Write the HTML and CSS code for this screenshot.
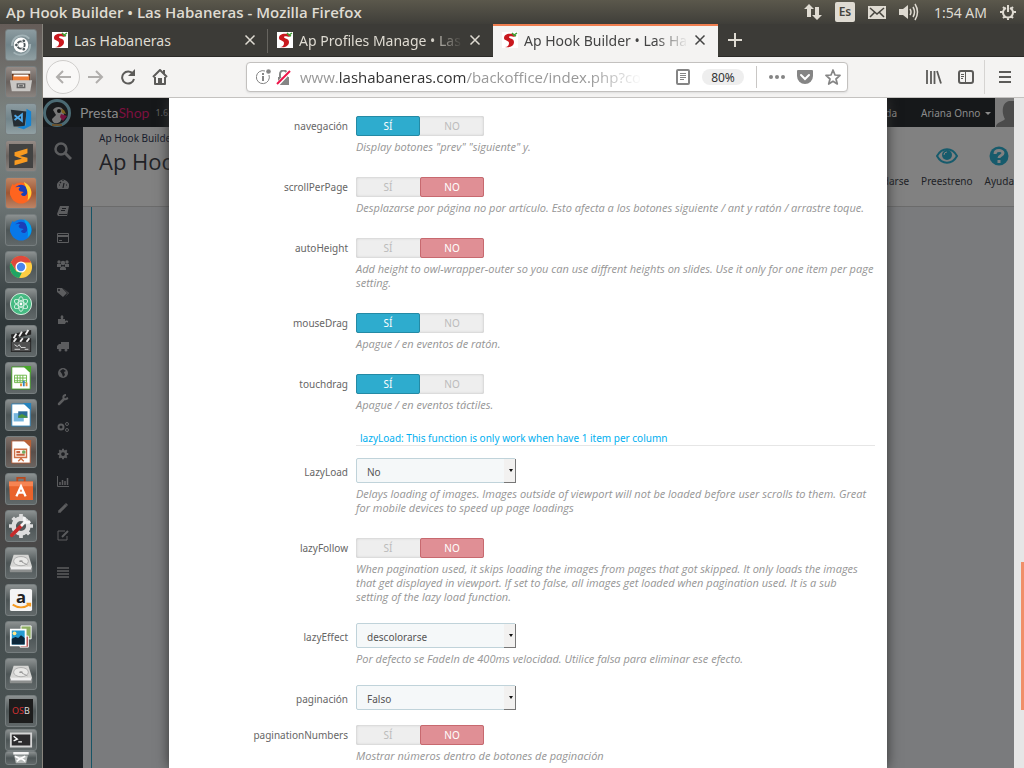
FILE: index.html
```html
<!DOCTYPE html>
<html lang="es">
<head>
<meta charset="utf-8">
<title>Ap Hook Builder • Las Habaneras</title>
<link rel="stylesheet" href="styles.css">
</head>
<body>
<svg class="defs" width="0" height="0" aria-hidden="true">
  <defs>
    <symbol id="chili" viewBox="0 0 16 16"><path fill="#fff" d="M0 0h16v16H0z"/><path fill="#c9191f" d="M11 2C5 1 2 3 2 6c0 3 5 2 5 5 0 2-1 4-4 4 5 1 9-1 9-5 0-4-5-3-5-5 0-1 2-1 6 0z"/><path fill="none" stroke="#3f9b32" stroke-width="1.5" d="M10 1l2 2 3-2M12 3l2 1"/></symbol>
    <symbol id="close" viewBox="0 0 12 12"><path fill="none" stroke="currentColor" stroke-width="1.5" d="M1.500 1.500l9 9M10.500 1.500l-9 9"/></symbol>
    <symbol id="drive" viewBox="0 0 26 26"><path fill="#d5d5d3" d="M5 4h16l4 13v5H1v-5z"/><path fill="#8d8f8e" d="M1 18h24v5H1z"/><path fill="#eee" d="M2 17h22v3H2z"/><ellipse cx="13" cy="11" rx="8" ry="5" fill="#e9e9e7" stroke="#aaa"/><ellipse cx="13" cy="11" rx="2" ry="1" fill="#999"/><path stroke="#999" d="M14 12l6 3"/></symbol>
    <symbol id="fox" viewBox="0 0 26 26"><circle cx="13" cy="13" r="11.500" fill="currentColor"/><circle cx="13" cy="11" r="7" fill="#1b3fb8"/><path d="M1 13C1 8 3 5 4 3l3 4c2-1 4-1 5 0-2 1-2 3 0 4l4 1-3 2c1 3 5 3 7 0-1 6-6 7-10 6-5 0-9-3-9-7z" fill="currentColor"/></symbol>
    <symbol id="gear" viewBox="0 0 16 16"><circle cx="8" cy="8" r="4" fill="none" stroke="currentColor" stroke-width="3"/><path stroke="currentColor" stroke-width="2.500" d="M8 1v3M8 12v3M1 8h3M12 8h3M3 3l2 2M11 11l2 2M13 3l-2 2M5 11l-2 2"/></symbol>
  </defs>
</svg>

<header class="panel">
  <h1 class="panel-title">Ap Hook Builder • Las Habaneras - Mozilla Firefox</h1>
  <div class="panel-tray">
    <svg width="18" height="18" viewBox="0 0 18 18"><path fill="currentColor" d="M5 1l5 5H7v8H3V6H0zM13 17l5-5h-3V4h-4v8H8z"/></svg>
    <span class="lang">Es</span>
    <svg width="18" height="13" viewBox="0 0 18 13"><path fill="currentColor" d="M0 0h18v13H0z"/><path fill="none" stroke="#46443e" stroke-width="1.500" d="M2 2l7 6 7-6M2 11l5-5M16 11l-5-5"/></svg>
    <svg width="20" height="18" viewBox="0 0 20 18"><path fill="currentColor" d="M0 6h4l5-4v14l-5-4H0z"/><path fill="none" stroke="currentColor" stroke-width="1.500" d="M11 6q2 3 0 6M14 4q3 5 0 10M16 1q5 8 0 16"/></svg>
    <span class="clock">1:54 AM</span>
    <svg width="16" height="16" viewBox="0 0 16 16"><path fill="none" stroke="currentColor" stroke-width="2" d="M6 4a5 5 0 1 0 4 0M8 1v7M0 8h3M13 8h3M3 3l2 2M13 3l-2 2M3 14l2-2M13 14l-2-2M8 13v3"/></svg>
  </div>
</header>

<div class="desktop">
  <nav class="launcher" aria-label="Lanzador">
    <button class="tile tile-light" aria-label="Ubuntu"><svg viewBox="0 0 26 26"><path fill="none" stroke="#a3b3b7" stroke-width="2" d="M3 14C4 2 16 0 22 6M23 12c0 12-12 14-18 9"/><circle cx="13" cy="13" r="8" fill="#fff"/><circle cx="13" cy="13" r="4" fill="none" stroke="#4b5559" stroke-width="2"/><g fill="#4b5559" stroke="#fff"><circle cx="8" cy="13" r="2"/><circle cx="16" cy="8.500" r="2"/><circle cx="16" cy="17.500" r="2"/></g></svg></button>
    <button class="tile tile-warm" aria-label="Archivos"><svg viewBox="0 0 26 26"><path fill="#e9e6e2" d="M3 1h20v12H3z"/><path fill="#5d341d" d="M3 4h20v8H3z"/><path fill="#ee7d35" d="M4 6h18v6H4z"/><path fill="#fff" d="M5 5h16v2H5z"/><path fill="#c9c7c4" d="M1 11h24l-2 12H3z"/><path fill="none" stroke="#666" stroke-width="1.500" d="M9 15h8v4H9zM11 17h4"/></svg></button>
    <button class="tile tile-light" aria-label="Visual Studio Code"><svg viewBox="0 0 26 26"><path fill="#252d33" d="M2 3l17 2-2 16H5z"/><path fill="#1583d2" d="M19 2l5 3v15l-8 4-7-2 9-2z"/><path fill="none" stroke="#4da7e8" stroke-width="2" d="M6 9l8 6V8l-8 6"/></svg></button>
    <button class="tile tile-warm" aria-label="Sublime Text"><svg viewBox="0 0 26 26"><path fill="#424242" d="M0 0h26v26H0z"/><path fill="#f99a20" d="M6 9l14-4v5l-8 3 8 2v4L6 23v-5l8-2-8-3z"/></svg></button>
    <button class="tile tile-orange" aria-label="Firefox"><svg class="fox-red" viewBox="0 0 26 26"><use href="#fox"/><path fill="#ffcf35" d="M16 1c9 4 11 14 4 20 2-7-1-13-4-20z"/></svg></button>
    <button class="tile" aria-label="Firefox Developer"><svg class="fox-blue" viewBox="0 0 26 26"><use href="#fox"/><path fill="#00a4ee" d="M16 1c9 4 11 14 4 20 2-7-1-13-4-20z"/></svg></button>
    <button class="tile" aria-label="Chrome"><svg viewBox="0 0 26 26"><circle cx="13" cy="13" r="12" fill="#ffce43"/><path fill="#df493c" d="M2 8a12 12 0 0 1 22 0H13l-6 8z"/><path fill="#20a464" d="M2 8l6 10 6 1-3 6A12 12 0 0 1 2 8z"/><circle cx="13" cy="13" r="6" fill="#fff"/><circle cx="13" cy="13" r="4.500" fill="#4a85ed"/></svg></button>
    <button class="tile" aria-label="Atom"><svg viewBox="0 0 26 26"><circle cx="13" cy="13" r="11.500" fill="#45ba82" stroke="#dff2e6"/><g fill="none" stroke="#d9f2e5"><ellipse cx="13" cy="13" rx="3" ry="8"/><ellipse cx="13" cy="13" rx="3" ry="8" transform="rotate(60 13 13)"/><ellipse cx="13" cy="13" rx="3" ry="8" transform="rotate(120 13 13)"/></g><circle cx="13" cy="13" r="1.500" fill="#fff"/></svg></button>
    <button class="tile" aria-label="Vídeo"><svg viewBox="0 0 26 26"><path fill="#252525" d="M2 6l22-5v5L3 11zM2 10h22v15H2z"/><path stroke="#eee" stroke-width="2" d="M5 10l3-5M11 8l3-5M18 6l3-5M5 14l3-4M12 14l3-4M19 14l3-4"/><path fill="#505050" d="M3 14h20v10H3z"/><path fill="none" stroke="#ddd" d="M6 17l3 2 2-2 2 3h5M6 22h6M17 22h4"/></svg></button>
    <button class="tile" aria-label="Calc"><svg viewBox="0 0 26 26"><path fill="#fff" stroke="#3d9721" d="M3 1h14l6 6v18H3z"/><path fill="#49a72c" d="M15 0h9v8z"/><path fill="none" stroke="#6ab645" d="M6 10h13v8H6zM6 13h13M6 16h13M9 10v8M12 10v8M15 10v8"/><path stroke="#e28d31" stroke-width="2" d="M13 22v-3M19 22v-4"/><path stroke="#3887c0" stroke-width="2" d="M16 22v-6"/></svg></button>
    <button class="tile" aria-label="Draw"><svg viewBox="0 0 26 26"><path fill="#fff" stroke="#2c7fb4" d="M3 1h14l6 6v18H3z"/><path fill="#2683bd" d="M15 0h9v8z"/><path fill="#75b6df" d="M5 11h11v9H5z"/><path fill="#2a6b98" d="M10 9h10v7H10z"/><path fill="#4b963f" d="M10 14l4-2 6 3v1H10z"/></svg></button>
    <button class="tile tile-dim" aria-label="Impress"><svg viewBox="0 0 26 26"><path fill="#fff" stroke="#ae5935" d="M3 1h14l6 6v18H3z"/><path fill="#b96136" d="M15 0h9v8z"/><path fill="#fff2e9" stroke="#ce7045" stroke-width="1.500" d="M6 10h13v9H6zM10 23l3-3 3 3"/><path stroke="#c66542" stroke-width="2" d="M8 13h4M8 16h9"/><circle cx="16" cy="13" r="2" fill="#73a95e"/></svg></button>
    <button class="tile" aria-label="Ubuntu Software"><svg viewBox="0 0 26 26"><path fill="none" stroke="#b8491f" stroke-width="2" d="M9 6V1h8v5"/><path fill="#e9632b" d="M0 5h26v20H1z"/><path fill="#f68452" d="M0 5h26v5H0z"/><path fill="none" stroke="#fff" stroke-width="2.500" d="M8 21l5-11 5 11M9 17h8"/></svg></button>
    <button class="tile" aria-label="Configuración"><svg viewBox="0 0 26 26"><circle cx="13" cy="13" r="8" fill="none" stroke="#ddd" stroke-width="5"/><path stroke="#ddd" stroke-width="4" d="M13 0v5M13 21v5M0 13h5M21 13h5M4 4l4 4M18 18l4 4M4 22l3-3"/><path stroke="#c52b2b" stroke-width="4" stroke-linecap="round" d="M3 23l10-10"/><path fill="none" stroke="#f5f5f5" stroke-width="3" d="M13 13l5-5M17 3c-2 4 2 8 6 5"/></svg></button>
    <button class="tile" aria-label="Disco"><svg><use href="#drive"/></svg></button>
    <button class="tile" aria-label="Amazon"><svg viewBox="0 0 26 26"><rect x="1" y="1" width="24" height="24" rx="2" fill="#f5f5f5"/><text class="amazon" x="13" y="16" text-anchor="middle">a</text><path fill="none" stroke="#f49a21" stroke-width="2" d="M4 18q9 6 18 0M19 17h4v3"/></svg></button>
    <button class="tile" aria-label="Fotos"><svg viewBox="0 0 26 26"><path fill="#8eae61" stroke="#fff" d="M13 1h11v14H13z"/><path fill="#af4545" stroke="#fff" d="M12 12h9v12h-9z"/><path fill="#259bd2" stroke="#fff" stroke-width="2" d="M2 5h16v17H2z"/><path fill="#0b2639" d="M3 15l4-2 3 1 3-3 4 3v7H3z"/><circle cx="6" cy="9" r="2" fill="#ffe88b"/></svg></button>
    <button class="tile" aria-label="Disco externo"><svg><use href="#drive"/></svg></button>
    <button class="tile" aria-label="OSB"><span class="osb"><b>OS</b>B</span></button>
    <div class="stack">
      <button class="tile tile-fold" aria-label="Terminal"><svg viewBox="0 0 26 20"><path fill="#2c2b2d" stroke="#d5d5d5" stroke-width="2" d="M2 3h22v14H2z"/><path fill="none" stroke="#fff" stroke-width="1.500" d="M5 6l4 3-4 2M10 12h4"/></svg></button>
      <button class="tile tile-trash" aria-label="Papelera"><svg viewBox="0 0 26 14"><path fill="#f2f2f2" d="M4 0h18v3H4z"/><path fill="#b6bab9" d="M5 4h16l-2 9H7z"/><path fill="none" stroke="#fff" stroke-width="2" d="M6 5l6 3 6-3M8 11l5-4 5 4"/></svg></button>
    </div>
  </nav>

  <section class="browser">
    <div class="tabs">
      <div class="tab"><svg class="favicon"><use href="#chili"/></svg><span class="tab-name">Las Habaneras</span><button class="tab-close" aria-label="Cerrar"><svg><use href="#close"/></svg></button></div>
      <div class="tab"><svg class="favicon"><use href="#chili"/></svg><span class="tab-name fade-end">Ap Profiles Manage • Las Habaneras</span><button class="tab-close" aria-label="Cerrar"><svg><use href="#close"/></svg></button></div>
      <div class="tab tab-active"><svg class="favicon"><use href="#chili"/></svg><span class="tab-name fade-end">Ap Hook Builder • Las Habaneras</span><button class="tab-close" aria-label="Cerrar"><svg><use href="#close"/></svg></button></div>
      <button class="new-tab" aria-label="Nueva pestaña"><svg width="14" height="14" viewBox="0 0 14 14"><path stroke="currentColor" stroke-width="2" d="M7 0v14M0 7h14"/></svg></button>
    </div>

    <div class="toolbar">
      <div class="nav-buttons">
        <button class="nav-back" aria-label="Atrás"><svg width="16" height="14" viewBox="0 0 16 14"><path fill="none" stroke="currentColor" stroke-width="2" d="M8 1L2 7l6 6M2 7h14"/></svg></button>
        <button class="nav-off" aria-label="Adelante"><svg width="16" height="14" viewBox="0 0 16 14"><path fill="none" stroke="currentColor" stroke-width="2" d="M8 1l6 6-6 6M14 7H0"/></svg></button>
        <button aria-label="Recargar"><svg width="16" height="16" viewBox="0 0 16 16"><path fill="none" stroke="currentColor" stroke-width="2" d="M13 5a6 6 0 1 0 1 5"/><path fill="currentColor" d="M15 0v7H8z"/></svg></button>
        <button aria-label="Inicio"><svg width="16" height="16" viewBox="0 0 16 16"><path fill="none" stroke="currentColor" stroke-width="2" stroke-linejoin="round" d="M1 8l7-7 7 7M3 8v7h10V8"/><path fill="currentColor" d="M6 9h4v6H6zM11 1h2v4h-2z"/></svg></button>
      </div>
      <div class="urlbar">
        <svg width="15" height="16" viewBox="0 0 15 16"><path fill="none" stroke="currentColor" stroke-width="1" d="M9 2a6.500 6.500 0 1 0 4 4"/><path stroke="currentColor" stroke-width="2" d="M7 7v5M7 4v2"/><circle cx="12.500" cy="2.500" r="2.300" fill="currentColor"/></svg>
        <svg class="insecure" width="15" height="15" viewBox="0 0 15 15"><path fill="currentColor" d="M2 7h11v8H2z"/><path fill="none" stroke="currentColor" stroke-width="2" d="M4 8V4a3 3 0 0 1 7 0v4"/><path stroke="#fff" stroke-width="4" d="M1 15L14 1"/><path stroke="#ed1348" stroke-width="2" d="M1 14L14 1"/></svg>
        <a class="url" href="#">www.<strong>lashabaneras.com</strong>/backoffice/index.php?controller</a>
        <svg width="14" height="16" viewBox="0 0 14 16"><rect x="1" y="1" width="12" height="14" rx="1" fill="none" stroke="currentColor" stroke-width="2"/><path stroke="currentColor" d="M4 4.500h6M4 6.500h6M4 8.500h6M4 10.500h4"/></svg>
        <button class="zoom-level">80%</button>
        <span class="url-split"></span>
        <svg width="16" height="4" viewBox="0 0 16 4"><circle cx="2" cy="2" r="2" fill="currentColor"/><circle cx="8" cy="2" r="2" fill="currentColor"/><circle cx="14" cy="2" r="2" fill="currentColor"/></svg>
        <svg width="16" height="14" viewBox="0 0 16 14"><path fill="currentColor" d="M1 0h14q1 0 1 1v5a8 8 0 0 1-16 0V1q0-1 1-1z"/><path fill="none" stroke="#fff" stroke-width="2" stroke-linecap="round" d="M4 5l4 4 4-4"/></svg>
        <svg width="16" height="16" viewBox="0 0 16 16"><path fill="none" stroke="currentColor" stroke-width="1.700" stroke-linejoin="round" d="M8 1l2 5 5 .4-4 3.600 1.300 5L8 12.300 3.700 15 5 10 1 6.400 6 6z"/></svg>
      </div>
      <div class="tool-buttons">
        <button aria-label="Biblioteca"><svg width="16" height="14" viewBox="0 0 16 14"><path stroke="currentColor" stroke-width="1.800" d="M1 0v14M5 1v13M8.500 1v13M11 1l4 12.500"/></svg></button>
        <button aria-label="Barra lateral"><svg width="16" height="14" viewBox="0 0 16 14"><rect x="1" y="1" width="14" height="12" rx="2" fill="none" stroke="currentColor" stroke-width="2"/><path stroke="currentColor" d="M7.500 1v12M3 4.500h3M3 6.500h3M3 8.500h2"/></svg></button>
        <span class="tool-split"></span>
        <button aria-label="Menú"><svg width="12" height="12" viewBox="0 0 12 12"><path stroke="currentColor" stroke-width="2" d="M0 1h12M0 6h12M0 11h12"/></svg></button>
      </div>
    </div>

    <div class="viewport">
      <div class="page">
        <div class="shop-head">
          <svg width="28" height="28" viewBox="0 0 28 28"><circle cx="14" cy="14" r="12.500" fill="#191b1d" stroke="#4b6a73" stroke-width="3"/><path fill="#777" d="M10 11c2-4 9-4 10 0l1 5-4 7c-5 3-8 0-8-3l4-4z"/><circle cx="16" cy="12" r="2" fill="#111"/><path fill="#806420" d="M18 10l3 1 2 4-4-1z"/><path fill="#76123f" d="M18 15l6 2-4 5-3-4z"/><path fill="#6a5430" d="M9 25h10v2H9z"/></svg>
          <span class="brand">Presta<b>Shop</b></span><span class="version">1.6.1</span>
          <a class="head-link" href="#">Mi tienda</a>
          <a class="head-user" href="#">Ariana Onno <i class="caret"></i></a>
          <svg width="19" height="29" viewBox="0 0 19 29"><path fill="#7b7b7b" d="M0 0h19v29H0z"/><path fill="#4b4b4b" d="M1 29c0-5 7-5 9-8-3-5-4-16 4-18h5v26z"/></svg>
        </div>
        <div class="shop-body">
          <nav class="side" aria-label="Menú">
            <svg class="search" viewBox="0 0 18 18"><circle cx="7" cy="7" r="5.500" fill="none" stroke="currentColor" stroke-width="2.500"/><path stroke="currentColor" stroke-width="3" d="M11 11l6 6"/></svg>
            <svg viewBox="0 0 12 12"><path fill="currentColor" d="M1 11a6 6 0 1 1 10 0z"/><path stroke="#1c1e22" stroke-width="1.200" d="M6 10l1-5M2 7h1M9 7h1M3 4l1 1M6 2v1"/></svg>
            <svg viewBox="0 0 12 12"><path fill="currentColor" d="M3 1h9l-2 10H1l-1-2z"/><path stroke="#1c1e22" d="M5 3.500h4M4 5.500h4M2 9.500h8"/></svg>
            <svg viewBox="0 0 12 12"><path fill="none" stroke="currentColor" d="M.5 1.500h11v9H.5zM2 8.500h3"/><path fill="currentColor" d="M0 3h12v2H0z"/></svg>
            <svg viewBox="0 0 12 12"><g fill="currentColor"><circle cx="2" cy="3" r="1.700"/><circle cx="10" cy="3" r="1.700"/><circle cx="6" cy="4" r="2.300"/><path d="M0 8V5h4v3zM8 8V5h4v3zM3 11c-1-5 7-5 6 0z"/></g></svg>
            <svg viewBox="0 0 12 12"><path fill="currentColor" d="M0 2h5l5 5-4 4-6-5zM6 2l6 5-4 4 3-4z"/><circle cx="2" cy="4" r="1" fill="#1c1e22"/></svg>
            <svg viewBox="0 0 12 12"><path fill="currentColor" d="M1 11V6h3c-2-5 4-5 2 0h2v2c4-2 4 3 1 1l-1 2z"/></svg>
            <svg viewBox="0 0 12 12"><path fill="currentColor" d="M4 2h8v7H4zM0 9V6l2-2h2v5z"/><circle cx="3" cy="10" r="1.500" fill="currentColor"/><circle cx="9" cy="10" r="1.500" fill="currentColor"/></svg>
            <svg viewBox="0 0 12 12"><circle cx="6" cy="6" r="5" fill="currentColor"/><path fill="#1c1e22" d="M6 2l3 2-2 1 1 3-2 2-1-3-2-3z"/></svg>
            <svg viewBox="0 0 12 12"><path stroke="currentColor" stroke-width="2.500" stroke-linecap="round" d="M2 10l5-5"/><path fill="none" stroke="currentColor" stroke-width="2" d="M9 1c-4 0-3 5 0 4l2-1"/></svg>
            <svg viewBox="0 0 12 12"><g fill="none" stroke="currentColor"><circle cx="4" cy="6" r="2.500" stroke-width="2"/><circle cx="10" cy="3" r="1.500"/><circle cx="10" cy="9" r="1.500"/></g></svg>
            <svg><use href="#gear"/></svg>
            <svg viewBox="0 0 12 12"><path fill="none" stroke="currentColor" d="M.5 1v10.500H12"/><path stroke="currentColor" stroke-width="1.500" d="M3 10V7M5.500 10V5M8 10V6M10.500 10V3"/></svg>
            <svg viewBox="0 0 12 12"><path stroke="currentColor" stroke-width="3" d="M2 10l7-7"/><path fill="currentColor" d="M1 11l1-3 2 2zM8 2l1-1 2 2-1 1z"/></svg>
            <svg viewBox="0 0 12 12"><path fill="none" stroke="currentColor" d="M8 2H1v9h9V7"/><path stroke="currentColor" stroke-width="2" d="M5 8l6-6"/></svg>
            <svg class="side-last" viewBox="0 0 12 12"><path stroke="currentColor" stroke-width="1.500" d="M0 2h12M0 5h12M0 8h12M0 11h12"/></svg>
          </nav>
          <div class="main">
            <div class="title-bar">
              <div class="titles"><span class="crumb">Ap Hook Builder</span><h2>Ap Hook Builder</h2></div>
              <div class="actions">
                <a href="#">quedarse</a>
                <a href="#"><svg width="22" height="16" viewBox="0 0 22 16"><path fill="none" stroke="currentColor" stroke-width="2" d="M1 8c5-9 15-9 20 0-5 9-15 9-20 0z"/><circle cx="11" cy="7" r="5" fill="currentColor"/><path fill="none" stroke="#818181" d="M8 7q0-3 3-3"/></svg>Preestreno</a>
                <a href="#"><svg width="20" height="20" viewBox="0 0 20 20"><circle cx="10" cy="10" r="9.500" fill="currentColor"/><path fill="none" stroke="#818181" stroke-width="3" d="M6 8c0-5 8-4 8-1 0 3-4 2-4 5M10 14v3"/></svg>Ayuda</a>
              </div>
            </div>
            <div class="canvas"></div>
          </div>
        </div>
      </div>

      <div class="modal" role="dialog" aria-label="Opciones">
        <div class="group"><span class="label">navegación</span><div class="field"><div class="switch"><label><input type="radio" name="nav" checked><span>SÍ</span></label><label class="no"><input type="radio" name="nav"><span>NO</span></label></div><p>Display botones "prev" "siguiente" y.</p></div></div>
        <div class="group"><span class="label">scrollPerPage</span><div class="field"><div class="switch"><label><input type="radio" name="scroll"><span>SÍ</span></label><label class="no"><input type="radio" name="scroll" checked><span>NO</span></label></div><p>Desplazarse por página no por artículo. Esto afecta a los botones siguiente / ant y ratón / arrastre toque.</p></div></div>
        <div class="group"><span class="label">autoHeight</span><div class="field"><div class="switch"><label><input type="radio" name="auto"><span>SÍ</span></label><label class="no"><input type="radio" name="auto" checked><span>NO</span></label></div><p>Add height to owl-wrapper-outer so you can use diffrent heights on slides. Use it only for one item per page setting.</p></div></div>
        <div class="group"><span class="label">mouseDrag</span><div class="field"><div class="switch"><label><input type="radio" name="mouse" checked><span>SÍ</span></label><label class="no"><input type="radio" name="mouse"><span>NO</span></label></div><p>Apague / en eventos de ratón.</p></div></div>
        <div class="group"><span class="label">touchdrag</span><div class="field"><div class="switch"><label><input type="radio" name="touch" checked><span>SÍ</span></label><label class="no"><input type="radio" name="touch"><span>NO</span></label></div><p>Apague / en eventos táctiles.</p></div></div>
        <h3 class="note">lazyLoad: This function is only work when have 1 item per column</h3>
        <div class="group"><label class="label" for="lazy">LazyLoad</label><div class="field"><div class="pick"><select id="lazy"><option>No</option></select></div><p>Delays loading of images. Images outside of viewport will not be loaded before user scrolls to them. Great for mobile devices to speed up page loadings</p></div></div>
        <div class="group"><span class="label">lazyFollow</span><div class="field"><div class="switch"><label><input type="radio" name="follow"><span>SÍ</span></label><label class="no"><input type="radio" name="follow" checked><span>NO</span></label></div><p>When pagination used, it skips loading the images from pages that got skipped. It only loads the images that get displayed in viewport. If set to false, all images get loaded when pagination used. It is a sub<br>setting of the lazy load function.</p></div></div>
        <div class="group"><label class="label" for="effect">lazyEffect</label><div class="field"><div class="pick"><select id="effect"><option>descolorarse</option></select></div><p>Por defecto se FadeIn de 400ms velocidad. Utilice falsa para eliminar ese efecto.</p></div></div>
        <div class="group"><label class="label" for="pag">paginación</label><div class="field"><div class="pick"><select id="pag"><option>Falso</option></select></div></div></div>
        <div class="group"><span class="label">paginationNumbers</span><div class="field"><div class="switch"><label><input type="radio" name="nums"><span>SÍ</span></label><label class="no"><input type="radio" name="nums" checked><span>NO</span></label></div><p>Mostrar números dentro de botones de paginación</p></div></div>
      </div>
      <div class="scrollbar"><div class="thumb"></div></div>
    </div>
  </section>
</div>
</body>
</html>
```
FILE: styles.css
```css
* { box-sizing: border-box; }
body { margin: 0; height: 100vh; display: flex; flex-direction: column; overflow: hidden; font-family: "Noto Sans", "Open Sans", sans-serif; font-size: 14px; color: #333; }
button { border: 0; padding: 0; background: none; color: inherit; font: inherit; display: flex; align-items: center; justify-content: center; }
a { color: inherit; text-decoration: none; }
svg { flex: none; }
.defs { position: absolute; }

.panel { flex: none; height: 24px; padding: 0 8px 0 6px; display: flex; align-items: center; justify-content: space-between; background: linear-gradient(#5b584c, #3f3e39); color: #dfdbd2; }
.panel-title { margin: 0; font-size: 15px; line-height: 20px; font-weight: 600; font-family: "Open Sans", sans-serif; }
.panel-tray { display: flex; align-items: center; gap: 13px; }
.lang { width: 20px; height: 20px; border-radius: 2px; background: #dfdbd2; color: #46443e; font-size: 12px; font-weight: 600; line-height: 20px; text-align: center; }
.clock { margin-left: 2px; }

.desktop { flex: 1; min-height: 0; display: flex; }
.launcher { flex: none; width: 43px; padding: 5px 0 0 5px; display: flex; flex-direction: column; gap: 5px; border-right: 1px solid #88857e; background: linear-gradient(#655c58, #7c8583 13%, #6c7474 24%, #30383a 40%, #333b3d 58%, #4b4544 66%, #454e4f 78%, #4c5454); }
.tile { flex: none; width: 32px; height: 32px; border-radius: 3px; border: 1px solid #777e7f; background: linear-gradient(#8c9191, #4d5556 50%, #616869); }
.tile svg { width: 24px; height: 24px; }
.tile-light { background: linear-gradient(#8c9ba0, #71848a 50%, #91a0a3); }
.tile-warm { background: linear-gradient(#958b86, #69615d 50%, #8a8480); }
.tile-dim { background: linear-gradient(#80726b, #594f4b 50%, #6b6460); }
.tile-orange { background: linear-gradient(#bd8666, #9f5633 50%, #bd8466); }
.fox-red { color: #ff641f; }
.fox-blue { color: #0878e8; }
.amazon { font: bold 18px "Open Sans", sans-serif; fill: #222; }
.osb { width: 24px; height: 24px; background: #1c1c1c; color: #ddd; font-size: 9px; line-height: 24px; text-align: center; }
.osb b { color: #d33333; font-weight: 400; }
.stack { margin-top: -3px; }
.tile-fold { height: 22px; }
.tile-fold svg { height: 20px; }
.tile-trash { height: 14px; }
.tile-trash svg { height: 12px; }

.browser { flex: 1; min-width: 0; display: flex; flex-direction: column; }
.tabs { flex: none; height: 33px; display: flex; background: #3c3b37; color: #dfdbd2; border-bottom: 1px solid #2b2a27; }
.tab { flex: none; width: 225px; padding: 0 12px 0 9px; display: flex; align-items: center; gap: 6px; }
.tab:first-child { background: linear-gradient(#66645f, #66645f) right 5px / 1px 24px no-repeat; }
.favicon { width: 16px; height: 16px; }
.tab-name { flex: 1; min-width: 0; overflow: hidden; white-space: nowrap; }
.fade-end { mask-image: linear-gradient(to right, #000 80%, transparent 100%); }
.tab-close svg { width: 12px; height: 12px; }
.tab-active { background: #f4f3f2; color: #444; box-shadow: inset 0 2px #ef7e50, 0 1px #f4f3f2; }
.new-tab { width: 34px; }

.toolbar { flex: none; height: 41px; padding: 0 13px 0 3px; display: flex; align-items: center; border-bottom: 1px solid #c4c2c0; background: #f4f3f2; color: #5c5b59; }
.nav-buttons { display: flex; align-items: center; }
.nav-buttons button { width: 32px; height: 34px; }
.nav-buttons .nav-back { width: 34px; border: 1px solid #cfcdcb; border-radius: 17px; background: #f9f8f7; color: #b0aeac; }
.nav-buttons .nav-off { color: #b0aeac; }
.urlbar { flex: 1; min-width: 0; height: 30px; margin: 0 78px 0 70px; padding: 0 6px 0 9px; display: flex; align-items: center; gap: 12px; border: 1px solid #c3c1bf; border-radius: 4px; background: #fff; color: #858585; box-shadow: 0 1px 2px #dddddd; }
.insecure { margin-left: -7px; }
.url { flex: 1; min-width: 0; margin-left: -3px; margin-right: 22px; overflow: hidden; white-space: nowrap; font-family: "Open Sans", sans-serif; font-size: 15px; color: #999; mask-image: linear-gradient(to right, #000 85%, transparent 100%); }
.url strong { font-weight: 400; color: #333; }
.zoom-level { width: 42px; height: 16px; border-radius: 8px; background: #eeeeee; color: #333; font-size: 12px; }
.url-split { width: 1px; height: 22px; background: #c9c7c5; }
.tool-buttons { display: flex; align-items: center; gap: 16px; }
.tool-split { width: 1px; height: 34px; margin-left: -6px; margin-right: -2px; background: #d6d4d2; }

.viewport { flex: 1; min-height: 0; display: flex; position: relative; overflow: hidden; background: #7a7b7d; font-size: 10px; }
.page { flex: 1; min-width: 0; display: flex; flex-direction: column; overflow: hidden; color: #202226; }
.shop-head { flex: none; height: 29px; display: flex; align-items: center; background: #16181a; color: #8b8b8b; }
.brand { margin-left: 9px; font-family: Lato, sans-serif; font-size: 14px; }
.brand b { font-weight: 400; color: #7b103f; }
.version { margin-left: 6px; font-size: 9px; color: #666; }
.head-link { margin-left: auto; }
.head-user { margin: 0 4px 0 24px; }
.caret { display: inline-block; margin-left: 2px; border: 3px solid transparent; border-top-color: #8b8b8b; border-bottom: 0; vertical-align: middle; }
.shop-body { flex: 1; display: flex; min-height: 0; }
.side { flex: none; width: 40px; padding-top: 15px; display: flex; flex-direction: column; align-items: center; gap: 15px; background: #1c1e22; color: #5c5d5f; }
.side svg { width: 12px; height: 12px; }
.side .search { width: 18px; height: 18px; margin-bottom: 3px; }
.side .side-last { margin-top: 10px; }
.main { flex: 1; min-width: 0; display: flex; flex-direction: column; }
.title-bar { flex: none; height: 80px; padding: 4px 0 0 16px; display: flex; justify-content: space-between; background: #818181; border-bottom: 1px solid #6b6b6b; }
.crumb { line-height: 14px; color: #171b2b; }
.titles h2 { margin: 1px 0 0; font-size: 22px; line-height: 30px; font-weight: 400; font-family: "Open Sans", sans-serif; }
.actions { margin-top: 15px; display: flex; gap: 12px; align-items: flex-end; height: 42px; line-height: 14px; }
.actions a { display: flex; flex-direction: column; align-items: center; justify-content: space-between; }
.actions a:nth-child(2) { height: 40px; }
.actions a:nth-child(3) { height: 42px; }
.actions svg { color: #175b6c; }
.canvas { flex: 1; margin-left: 8px; border-left: 1px solid #175466; }

.modal { position: absolute; top: 0; bottom: 0; left: 126px; right: 137px; padding: 14px 12px 0 12px; overflow: hidden; background: #fff; box-shadow: 0 0 12px #333333; color: #666; }
.group { display: grid; grid-template-columns: 167px 1fr; column-gap: 8px; margin-bottom: 11px; }
.label { line-height: 14px; padding-top: 7px; text-align: right; }
.switch { width: 128px; height: 20px; margin-top: 4px; display: grid; grid-template-columns: 1fr 1fr; border-radius: 2px; background: #eeeeee; box-shadow: inset 0 0 3px #bbbbbb; }
.switch input { position: absolute; opacity: 0; margin: 0; }
.switch span { display: block; height: 20px; border: 1px solid transparent; border-radius: 2px; line-height: 18px; text-align: center; color: #bbb; }
.switch input:checked + span { background: #2eacce; border-color: #248aa5; color: #fff; }
.switch .no input:checked + span { background: #e08f95; border-color: #c7696f; }
.field p { margin: 4px 0 8px; line-height: 14px; font-family: "Open Sans", sans-serif; font-style: italic; font-size: 11px; color: #959595; }
.note { margin: 0 0 12px 175px; padding-left: 4px; height: 15px; border-bottom: 1px solid #e6e6e6; font-size: 10px; line-height: 14px; font-weight: 400; color: #00aff0; }
.pick { position: relative; width: 160px; height: 25px; }
.pick select { width: 100%; height: 25px; padding: 2px 10px 0; appearance: none; border: 1px solid #c0d3da; border-radius: 2px; background: #f5f8f9; color: #555; font: 10px "Noto Sans", sans-serif; }
.pick::before { content: ""; position: absolute; top: 1px; right: 0; width: 11px; height: 23px; background: #f2f1f0; border-right: 1px solid #777; border-bottom: 1px solid #777; pointer-events: none; }
.pick::after { content: ""; position: absolute; top: 11px; right: 3px; border: 2px solid transparent; border-top: 3px solid #111; border-bottom: 0; pointer-events: none; }
.scrollbar { flex: none; width: 10px; padding-top: 464px; background: #e6e6e6; }
.thumb { width: 3px; height: 148px; margin-left: 7px; background: #f08f69; }
```
